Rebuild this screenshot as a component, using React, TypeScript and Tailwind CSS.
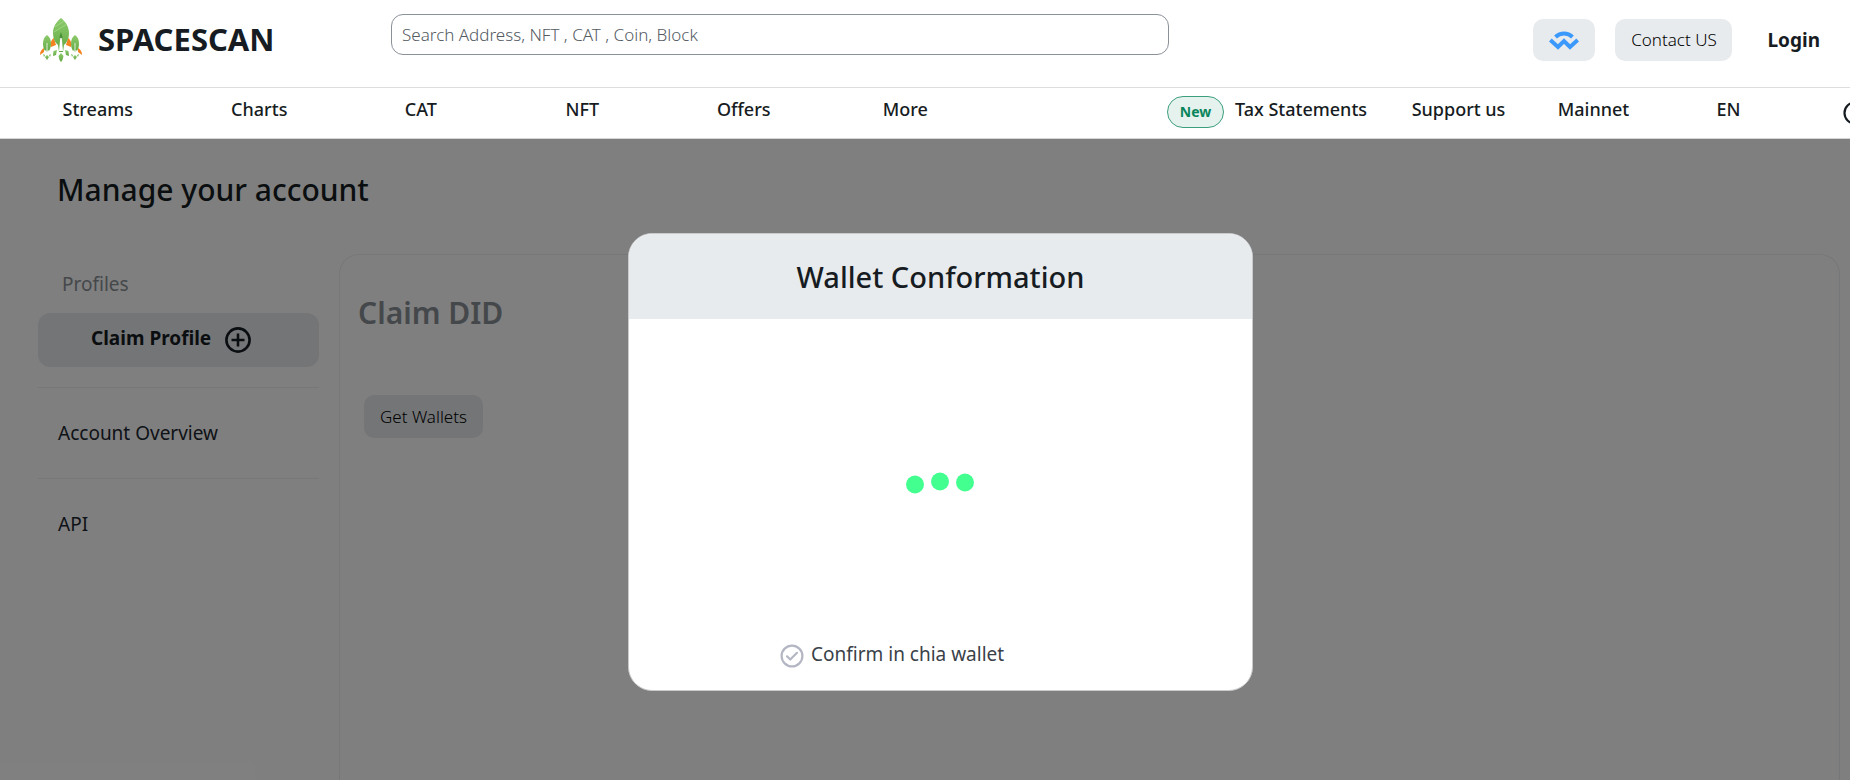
import React from "react";

const primaryLinks = ["Streams", "Charts", "CAT", "NFT", "Offers", "More"];
const secondaryLinks = ["Support us", "Mainnet", "EN"];

function RocketLogo() {
  return (
    <svg viewBox="0 0 42 44" className="h-11 w-[42px] shrink-0" aria-hidden="true">
      <defs>
        <linearGradient id="hull" x1="0" y1="0" x2="0" y2="1">
          <stop offset="0" stopColor="#8dcb6c" />
          <stop offset="1" stopColor="#62a845" />
        </linearGradient>
      </defs>
      <g fill="#f58220">
        <path d="M14 20c-2 1-4 4-3 9l5-2zM28 20c2 1 4 4 3 9l-5-2z" />
        <path d="M4 30c-2 1-4 3-4 7l4-3zM38 30c2 1 4 3 4 7l-4-3z" />
      </g>
      <path d="M21 0c5 4 8 9 8 15 0 4-1 7-3 10l-2 2-1 7h-4l-1-7-2-2c-2-3-3-6-3-10C13 9 16 4 21 0z" fill="url(#hull)" />
      <path d="M15 9l9-6M14 14l13-8" stroke="#a5d98a" strokeWidth="0.8" />
      <path d="M21 14l1.500 5-1.500 5-1.500-5z" fill="#4b8f38" />
      <path d="M20.300 20h1.400l1.300 13h-4z" fill="#fff" />
      <g fill="url(#hull)">
        <path d="M7 17c3 2 4 5 4 9 0 3-1 5-2 7l-1-1-1 2-1-2-1 1c-1-2-2-4-2-7 0-4 1-7 4-9z" />
        <path d="M35 17c3 2 4 5 4 9 0 3-1 5-2 7l-1-1-1 2-1-2-1 1c-1-2-2-4-2-7 0-4 1-7 4-9z" />
        <path d="M21 35l2.500 3-1 4-1.500 2-1.500-2-1-4z" />
        <path d="M13.500 33l3.500-1-1 5-3 1zM28.500 33l-3.500-1 1 5 3 1z" />
        <path d="M7 37l2 2-2 3-2-3zM35 37l2 2-2 3-2-3z" />
        <path d="M3 36l2 1-1 2zM11 36l-2 1 1 2zM31 36l2 1-1 2zM39 36l-2 1 1 2z" />
      </g>
      <path d="M7 25v8M35 25v8" stroke="#fff" strokeWidth="0.8" />
    </svg>
  );
}

function WalletConnectIcon() {
  return (
    <svg viewBox="0 0 30 20" className="h-5 w-[30px]" fill="none" stroke="#3b99fc" strokeWidth="4" aria-hidden="true">
      <path d="M6.500 7c4.800-4.600 12.200-4.600 17 0" />
      <path d="M1.300 10L9 17l6-6 6 6 7.700-7" />
    </svg>
  );
}

function PlusCircle() {
  return (
    <svg viewBox="0 0 26 26" className="h-[26px] w-[26px]" fill="none" stroke="#161c22" strokeWidth="2.6" aria-hidden="true">
      <circle cx="13" cy="13" r="11.600" />
      <path d="M6.500 13h13M13 6.500v13" />
    </svg>
  );
}

function CheckCircle() {
  return (
    <svg viewBox="0 0 24 24" className="h-6 w-6" fill="none" stroke="#b4b7c3" strokeWidth="2.200" aria-hidden="true">
      <circle cx="12" cy="12" r="10.400" />
      <path d="M7 12.300l3.300 3.200L17 8.800" strokeLinecap="round" strokeLinejoin="round" />
    </svg>
  );
}

function Header() {
  return (
    <header className="flex h-[88px] items-start border-b border-[#dcdddf] pl-10 pr-[30px]">
      <a href="#" className="flex w-[351px] shrink-0 items-start pt-[18px]">
        <RocketLogo />
        <span className="pl-4 text-[31px] leading-[42px] font-bold">SPACESCAN</span>
      </a>
      <div className="min-w-0 flex-1 pt-[14px]">
        <input
          type="search"
          aria-label="Search"
          placeholder="Search Address, NFT , CAT , Coin, Block"
          className="h-[41px] w-full max-w-[778px] rounded-xl border border-[#8a9199] bg-white px-[10px] text-[17px] font-light placeholder:text-[#545b63]"
        />
      </div>
      <div className="flex shrink-0 items-center pt-[19px]">
        <button aria-label="Connect wallet" className="flex h-[42px] w-[62px] items-center justify-center rounded-[10px] bg-[#e8ebee]">
          <WalletConnectIcon />
        </button>
        <button className="ml-5 h-[42px] w-[117px] rounded-[10px] bg-[#e8ebee] text-[17px] font-light text-black">Contact US</button>
        <a href="#" className="ml-[35px] text-[19px] font-bold">Login</a>
      </div>
    </header>
  );
}

function Nav() {
  return (
    <nav className="flex h-[51px] overflow-hidden border-b border-[#d4d5d6] text-[18px] font-medium">
      <div className="flex min-w-0 flex-1 pl-[17px]">
        <div className="grid w-full max-w-[969px] grid-cols-6">
          {primaryLinks.map((label) => (
            <a key={label} href="#" className="pt-[7px] text-center leading-7">{label}</a>
          ))}
        </div>
      </div>
      <div className="flex shrink-0">
        <a href="#" className="flex w-[224px] gap-[11px]">
          <span className="mt-2 flex h-8 w-[57px] items-center justify-center rounded-full border border-[#3c9f7c] bg-[#e6f2ee] pb-px text-[14px] font-bold text-[#0a855c]">
            New
          </span>
          <span className="pt-[7px] leading-7">Tax Statements</span>
        </a>
        {secondaryLinks.map((label) => (
          <a key={label} href="#" className="w-[135px] pt-[7px] text-center leading-7">{label}</a>
        ))}
        <button aria-label="Toggle theme" className="ml-[47px] flex w-[7px] items-start overflow-hidden pt-[13px]">
          <svg viewBox="0 0 24 24" className="h-6 w-6 shrink-0" fill="none" stroke="#161c22" strokeWidth="2.200" aria-hidden="true">
            <circle cx="12" cy="12" r="10.500" />
          </svg>
        </button>
      </div>
    </nav>
  );
}

function Sidebar() {
  return (
    <aside className="w-[281px] shrink-0">
      <p className="pt-[15px] pl-6 text-[19px] leading-[30px] text-[#8a9097]">Profiles</p>
      <button className="mt-[14px] flex h-[54px] w-full items-center gap-[14px] rounded-xl bg-[#e8ebee] pl-[53px] text-[19px] font-bold">
        <span className="pb-1">Claim Profile</span>
        <PlusCircle />
      </button>
      <ul className="mt-5 text-[19px] text-[#20272f]">
        <li className="border-t border-[#eceef0]">
          <a href="#" className="block pl-5 leading-[90px]">Account Overview</a>
        </li>
        <li className="border-t border-[#eceef0]">
          <a href="#" className="block pl-5 leading-[90px]">API</a>
        </li>
      </ul>
    </aside>
  );
}

function WalletDialog() {
  return (
    <section
      role="dialog"
      aria-labelledby="wallet-title"
      className="flex h-[458px] w-[625px] flex-col overflow-hidden rounded-3xl border border-[#c8cacc] bg-white"
    >
      <h2 id="wallet-title" className="h-[85px] shrink-0 bg-[#e8ebee] text-center text-[29px] leading-[86px] font-medium">
        Wallet Conformation
      </h2>
      <div className="flex flex-1 items-center justify-center pt-1.5 pr-0.5">
        <svg viewBox="0 0 68 24" className="h-6 w-[68px]" fill="#42ff90" role="img" aria-label="Loading">
          <circle cx="9" cy="13.500" r="9" />
          <circle cx="34" cy="10.500" r="9" />
          <circle cx="59" cy="11.500" r="9" />
        </svg>
      </div>
      <p className="flex items-center gap-[7px] pb-[18px] pl-[151px] text-[19px] leading-7 text-[#3a4149]">
        <CheckCircle />
        <span className="pb-1">Confirm in chia wallet</span>
      </p>
    </section>
  );
}

export default function App() {
  return (
    <div className="flex h-screen flex-col overflow-hidden bg-white font-['Noto_Sans','Open_Sans',sans-serif] text-[#161c22]">
      <Header />
      <Nav />
      <main className="relative flex min-h-0 flex-1 flex-col">
        <h1 className="pt-[30px] pl-[57px] text-[30px] leading-[42px] font-medium">Manage your account</h1>
        <div className="flex min-h-0 flex-1 gap-5 pt-[43px] pr-[10px] pl-[38px]">
          <Sidebar />
          <section className="min-w-0 flex-1 rounded-t-[20px] border border-b-0 border-[#eceef0] px-[18px] pt-[37px]">
            <h2 className="text-[30px] leading-[42px] font-semibold text-[#8a9097]">Claim DID</h2>
            <button className="mt-[61px] ml-[6px] h-[43px] w-[119px] rounded-[10px] bg-[#e8ebee] text-[17px] font-light text-black">
              Get Wallets
            </button>
          </section>
        </div>
        <div className="absolute inset-0 flex items-start justify-center bg-black/50 pt-[94px] pl-[31px]">
          <WalletDialog />
        </div>
      </main>
    </div>
  );
}
